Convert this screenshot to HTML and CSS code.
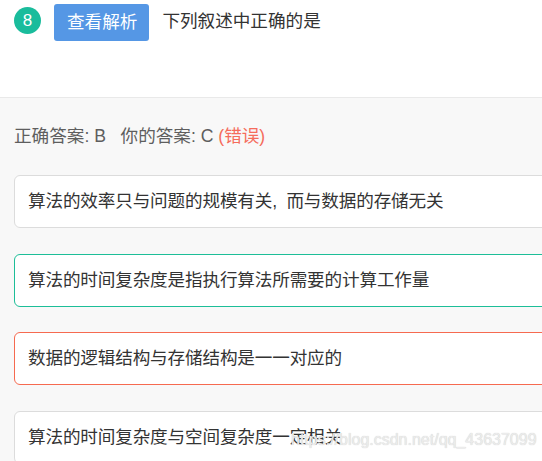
FILE: index.html
```html
<!DOCTYPE html>
<html lang="zh-CN">
<head>
<meta charset="utf-8">
<title>题目 8</title>
<link rel="stylesheet" href="styles.css">
</head>
<body>
<div class="page">
  <header class="q-head">
    <span class="q-num">8</span>
    <button class="q-btn" type="button">查看解析</button>
    <span class="q-title">下列叙述中正确的是</span>
  </header>
  <section class="q-body">
    <p class="q-answer">正确答案: B&nbsp;&nbsp;&nbsp;你的答案: C <span class="q-wrong">(错误)</span></p>
    <ul class="q-options">
      <li class="q-opt">算法的效率只与问题的规模有关,&nbsp; 而与数据的存储无关</li>
      <li class="q-opt q-opt-right">算法的时间复杂度是指执行算法所需要的计算工作量</li>
      <li class="q-opt q-opt-wrong">数据的逻辑结构与存储结构是一一对应的</li>
      <li class="q-opt">算法的时间复杂度与空间复杂度一定相关</li>
    </ul>
  </section>
  <div class="watermark">https://blog.csdn.net/qq_43637099</div>
</div>
</body>
</html>
```
FILE: styles.css
```css
html, body {
  margin: 0;
  padding: 0;
  overflow: hidden;
  background: #ffffff;
}
body {
  font-family: "Liberation Sans", "Noto Sans CJK SC", sans-serif;
  font-size: 17.6px;
  color: #333333;
}
.page {
  position: relative;
  width: 542px;
  height: 461px;
  overflow: hidden;
}
.q-head {
  box-sizing: border-box;
  height: 98px;
  padding: 4px 14px 0;
  display: flex;
  align-items: flex-start;
  border-bottom: 1px solid #e9e9e9;
}
.q-num {
  width: 27px;
  height: 27px;
  margin-top: 3px;
  border-radius: 50%;
  background: #1abc9c;
  color: #ffffff;
  font-size: 17px;
  line-height: 27px;
  text-align: center;
}
.q-btn {
  margin-left: 13px;
  height: 37px;
  padding: 0 12px 0 13px;
  border: none;
  border-radius: 3px;
  background: #5597e5;
  color: #ffffff;
  font-family: "Liberation Sans", "Noto Sans CJK SC", sans-serif;
  font-size: 17.6px;
  line-height: 37px;
}
.q-title {
  margin-left: 13px;
  line-height: 34px;
  color: #333333;
}
.q-body {
  background: #f8f8f8;
  padding: 26px 0 0 14px;
  height: 400px;
}
.q-answer {
  margin: 0 0 27px;
  line-height: 24px;
  color: #5e5e5e;
}
.q-wrong {
  color: #f56c5c;
}
.q-options {
  list-style: none;
  margin: 0;
  padding: 0;
  display: flex;
  flex-direction: column;
  gap: 25.5px;
}
.q-opt {
  width: 600px;
  box-sizing: border-box;
  height: 53px;
  padding: 0 13px;
  border: 1px solid #dcdcdc;
  border-radius: 6px;
  background: #ffffff;
  line-height: 51px;
  color: #333333;
  letter-spacing: -0.15px;
  white-space: nowrap;
}
.q-opt-right {
  border-color: #1dbe98;
}
.q-opt-wrong {
  border-color: #f66a50;
}
.watermark {
  position: absolute;
  left: 291px;
  top: 430px;
  font-family: "Liberation Sans", sans-serif;
  font-size: 16px;
  line-height: 20px;
  color: #ececec;
  text-shadow: 0 0 1px #c4c4c4;
  white-space: nowrap;
}
```
